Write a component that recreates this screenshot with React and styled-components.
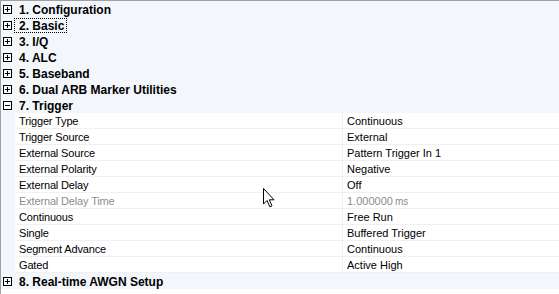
import React from 'react';
import styled, { createGlobalStyle } from 'styled-components';

const GlobalStyle = createGlobalStyle`
  html, body {
    margin: 0;
    padding: 0;
    background: #ffffff;
  }
  body {
    font-family: "Liberation Sans", Arial, sans-serif;
  }
`;

const Grid = styled.div`
  position: relative;
  width: 559px;
  height: 294px;
  box-sizing: border-box;
  border-top: 1px solid #a0a0a0;
  border-left: 1px solid #a0a0a0;
  background: #ffffff;
  overflow: hidden;
`;

const CategoryRow = styled.div`
  display: flex;
  align-items: center;
  height: 16px;
  background: #f3f6fb;
`;

const Expander = styled.div`
  box-sizing: border-box;
  width: 9px;
  height: 9px;
  margin: 1px 2px 0 2px;
  border: 1px solid #000;
  position: relative;
  background: #fff;

  &::before {
    content: '';
    position: absolute;
    left: 1px;
    right: 1px;
    top: 3px;
    height: 1px;
    background: #000;
  }
  &::after {
    content: '';
    display: ${p => (p.$open ? 'none' : 'block')};
    position: absolute;
    top: 1px;
    bottom: 1px;
    left: 3px;
    width: 1px;
    background: #000;
  }
`;

const CategoryLabel = styled.span`
  box-sizing: border-box;
  height: 15px;
  display: flex;
  align-items: center;
  padding: 2px 3px 0 5px;
  font-size: 12px;
  font-weight: bold;
  color: #000;
  outline: ${p => (p.$focused ? '1px dotted #000' : 'none')};
  outline-offset: -1px;
`;

const PropRow = styled.div`
  display: grid;
  grid-template-columns: 14px 328px 1fr;
  height: 16px;
  background: #f3f6fb;
`;

const Cell = styled.div`
  display: flex;
  align-items: center;
  box-sizing: border-box;
  padding: 1px 0 0 4px;
  background: #ffffff;
  border-bottom: 1px solid #f0f0f0;
  font-size: 11px;
  color: ${p => (p.$disabled ? '#8d8d8d' : '#000')};
  white-space: nowrap;
`;

const NameCell = styled(Cell)`
  grid-column: 2;
  border-right: 1px solid #f0f0f0;
  letter-spacing: -0.15px;
`;

const Unit = styled.span`
  font-size: 10px;
  margin-left: 2px;
`;

const Cursor = styled.svg`
  position: absolute;
  left: 262px;
  top: 187px;
  width: 13px;
  height: 20px;
`;

const collapsedBefore = [
  { label: '1. Configuration' },
  { label: '2. Basic', focused: true },
  { label: '3. I/Q' },
  { label: '4. ALC' },
  { label: '5. Baseband' },
  { label: '6. Dual ARB Marker Utilities' },
];

const triggerProps = [
  { name: 'Trigger Type', value: 'Continuous' },
  { name: 'Trigger Source', value: 'External' },
  { name: 'External Source', value: 'Pattern Trigger In 1' },
  { name: 'External Polarity', value: 'Negative' },
  { name: 'External Delay', value: 'Off' },
  { name: 'External Delay Time', value: '1.000000', unit: 'ms', disabled: true },
  { name: 'Continuous', value: 'Free Run' },
  { name: 'Single', value: 'Buffered Trigger' },
  { name: 'Segment Advance', value: 'Continuous' },
  { name: 'Gated', value: 'Active High' },
];

const Category = ({ label, open, focused }) => (
  <CategoryRow>
    <Expander $open={open} />
    <CategoryLabel $focused={focused}>{label}</CategoryLabel>
  </CategoryRow>
);

export default function App() {
  return (
    <>
      <GlobalStyle />
      <Grid>
        {collapsedBefore.map(c => (
          <Category key={c.label} label={c.label} focused={c.focused} />
        ))}
        <Category label="7. Trigger" open />
        {triggerProps.map(p => (
          <PropRow key={p.name}>
            <NameCell $disabled={p.disabled}>{p.name}</NameCell>
            <Cell $disabled={p.disabled}>
              {p.value}
              {p.unit && <Unit>{p.unit}</Unit>}
            </Cell>
          </PropRow>
        ))}
        <Category label="8. Real-time AWGN Setup" />
        <Cursor viewBox="0 0 13 20">
          <path
            d="M0.5 0.5 L0.5 16 L4 12.5 L6.8 18.8 L9 17.8 L6.3 11.8 L11 11.8 Z"
            fill="#fff"
            stroke="#000"
            strokeWidth="1"
          />
        </Cursor>
      </Grid>
    </>
  );
}
